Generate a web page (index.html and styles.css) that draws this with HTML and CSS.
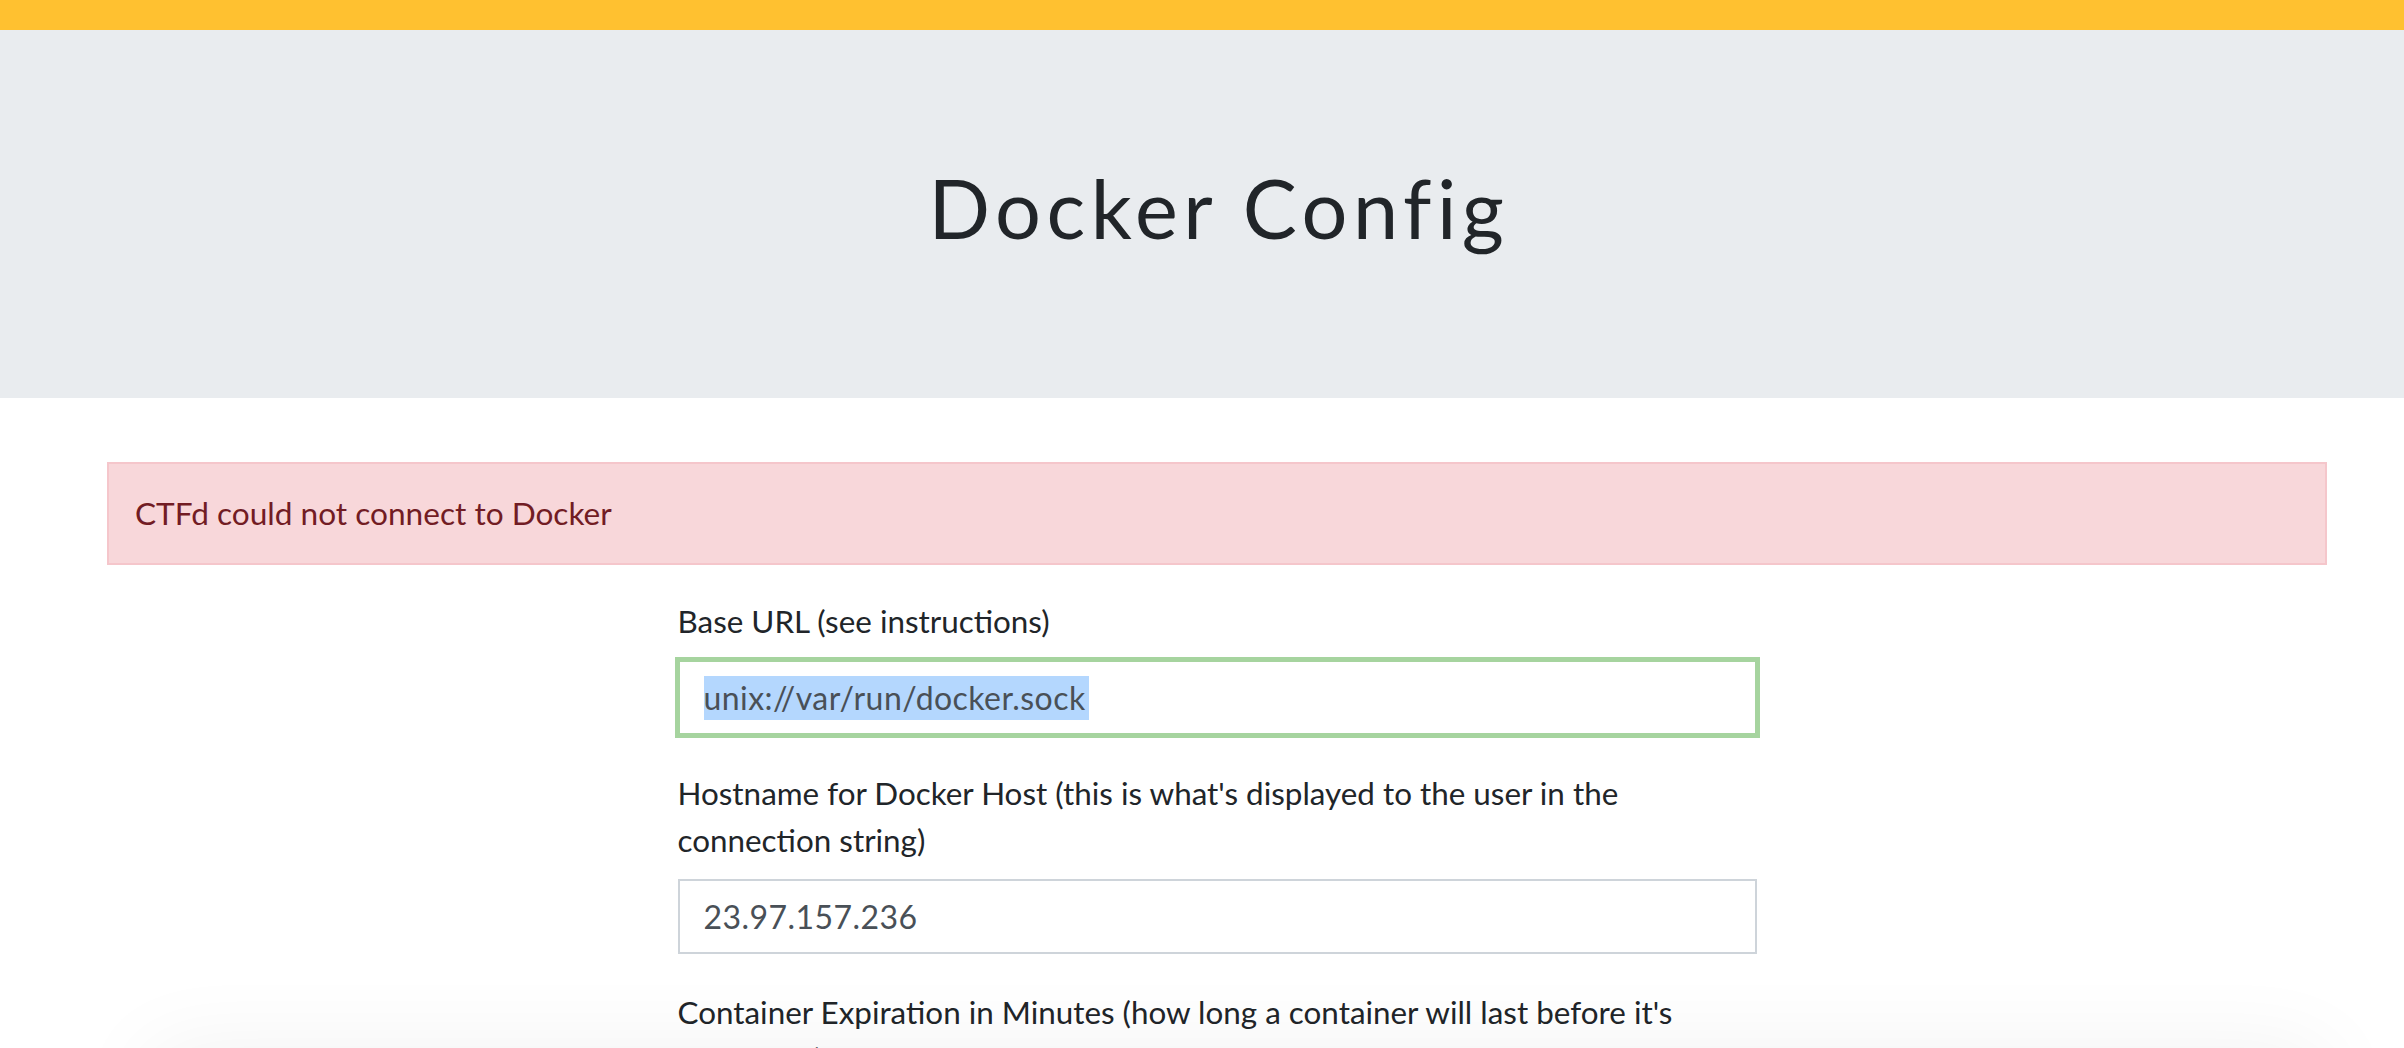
FILE: index.html
```html
<!DOCTYPE html>
<html lang="en">
<head>
<meta charset="utf-8">
<title>Docker Config</title>
<link rel="stylesheet" href="styles.css">
</head>
<body>
<div class="topbar"></div>
<header class="jumbotron">
  <h1 class="title">Docker Config</h1>
</header>
<main class="container">
  <div class="alert">CTFd could not connect to Docker</div>
  <form class="form">
    <div class="form-group">
      <label class="label" for="base-url">Base URL (see instructions)</label>
      <input class="form-control focused" id="base-url" type="text" value="unix://var/run/docker.sock">
    </div>
    <div class="form-group">
      <label class="label" for="hostname">Hostname for Docker Host (this is what's displayed to the user in the connection string)</label>
      <input class="form-control" id="hostname" type="text" value="23.97.157.236">
    </div>
    <div class="form-group">
      <label class="label" for="expiration">Container Expiration in Minutes (how long a container will last before it's destroyed)</label>
      <input class="form-control" id="expiration" type="text" value="60">
    </div>
  </form>
</main>
<div class="bottom-shade"></div>
</body>
</html>
```
FILE: styles.css
```css
html, body {
  margin: 0;
  padding: 0;
  background: #ffffff;
  overflow: hidden;
}
body {
  font-family: "Lato", "Liberation Sans", sans-serif;
  font-size: 31.4px;
  line-height: 46.5px;
  color: #212529;
}
.topbar {
  height: 30px;
  background: #ffc130;
}
.jumbotron {
  box-sizing: border-box;
  height: 368px;
  padding-left: 34px;
  background: #e9ecef;
  display: flex;
  align-items: center;
  justify-content: center;
}
.title {
  margin: 0;
  font-family: "Lato", "Liberation Sans", sans-serif;
  font-weight: 400;
  font-size: 81px;
  line-height: 1.2;
  letter-spacing: 5.5px;
  color: #212529;
  position: relative;
  top: -6px;
}
.container {
  width: 2220px;
  margin: 64px auto 0 107px;
}
.alert {
  box-sizing: border-box;
  border: 2px solid #f5c6cb;
  background: #f8d7da;
  color: #721c24;
  padding: 26px;
  margin-bottom: 33px;
  font-size: 31.6px;
}
.form {
  width: 1079px;
  margin: 0 auto;
}
.form-group {
  margin-bottom: 35px;
}
.label {
  display: block;
  margin-bottom: 16px;
}
.form-control {
  display: block;
  box-sizing: border-box;
  width: 100%;
  height: 75px;
  margin: 0;
  padding: 0 24px;
  border: 2px solid #ced4da;
  background: #ffffff;
  color: #495057;
  font-family: "Lato", "Liberation Sans", sans-serif;
  font-size: 32px;
  letter-spacing: 0.45px;
  line-height: normal;
  outline: none;
  border-radius: 0;
}
.focused {
  border-color: #a6d49f;
  box-shadow: 0 0 0 3px #a6d49f;
  background-color: #ffffff;
  background-image: linear-gradient(#b4d7fe, #b4d7fe);
  background-repeat: no-repeat;
  background-size: 385px 44px;
  background-position: 24px 50%;
}
.bottom-shade {
  position: fixed;
  left: 170px;
  right: 100px;
  top: 1070px;
  height: 200px;
  background: #f2f2f2;
  box-shadow: 0 0 90px 20px rgba(0, 0, 0, 0.06);
}
```
